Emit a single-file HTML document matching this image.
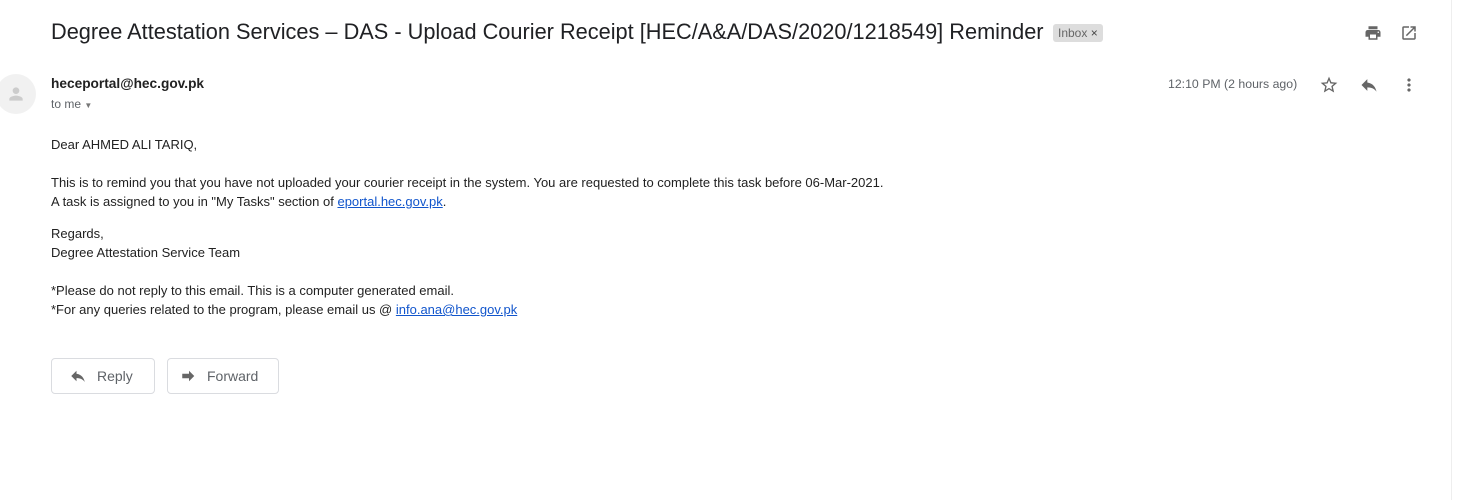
<!DOCTYPE html>
<html><head><meta charset="utf-8"><style>
*{margin:0;padding:0;box-sizing:border-box}
body{width:1464px;height:500px;background:#fff;font-family:"Liberation Sans",Arial,sans-serif;position:relative;overflow:hidden;color:#222}
.a{position:absolute;white-space:nowrap}
.vline{position:absolute;left:1451px;top:0;width:1px;height:500px;background:#eee}
.title{left:51px;top:19px;font-size:21.75px;color:#202124}
.chip{left:1053px;top:24px;height:18px;padding:0 5px;background:#ddd;border-radius:3px;font-size:12px;color:#666;line-height:18px}
.av{left:-4px;top:74px;width:40px;height:40px;border-radius:50%;background:#f1f1f1}
.body{left:51px;font-size:13px;color:#222}
a{color:#15c;text-decoration:underline}
.btn{position:absolute;top:358px;height:36px;border:1px solid #dadce0;border-radius:4px;font-size:14px;color:#5f6368;line-height:34px}
</style></head><body>
<div class="vline"></div>
<div class="a title">Degree Attestation Services – DAS - Upload Courier Receipt [HEC/A&amp;A/DAS/2020/1218549] Reminder</div>
<div class="a chip">Inbox <span style="color:#444">×</span></div>
<svg class="a" style="left:1364px;top:24px" width="18" height="18" viewBox="0 0 24 24"><path fill="#666" d="M19 8H5c-1.66 0-3 1.34-3 3v6h4v4h12v-4h4v-6c0-1.66-1.34-3-3-3zm-3 11H8v-5h8v5zm3-7c-.55 0-1-.45-1-1s.45-1 1-1 1 .45 1 1-.45 1-1 1zm-1-9H6v4h12V3z"/></svg>
<svg class="a" style="left:1400px;top:24px" width="18" height="18" viewBox="0 0 24 24"><path fill="#666" d="M19 19H5V5h7V3H5a2 2 0 00-2 2v14a2 2 0 002 2h14c1.1 0 2-.9 2-2v-7h-2v7zM14 3v2h3.59l-9.83 9.83 1.41 1.41L19 6.41V10h2V3h-7z"/></svg>
<div class="a av"><svg style="position:absolute;left:10px;top:10px" width="20" height="20" viewBox="0 0 24 24"><path fill="#ccc" d="M12 12c2.2 0 4-1.8 4-4s-1.8-4-4-4-4 1.8-4 4 1.8 4 4 4zm0 2c-2.7 0-8 1.3-8 4v2h16v-2c0-2.7-5.3-4-8-4z"/></svg></div>
<div class="a" style="left:51px;top:76px;font-size:13.7px;font-weight:bold;color:#222">heceportal@hec.gov.pk</div>
<div class="a" style="left:51px;top:97px;font-size:12px;color:#5f6368">to me <span style="font-size:8px;color:#777">▼</span></div>
<div class="a" style="left:1168px;top:77px;font-size:12.3px;color:#5f6368">12:10 PM (2 hours ago)</div>
<svg class="a" style="left:1319px;top:75px" width="20" height="20" viewBox="0 0 24 24"><path fill="#666" d="M22 9.24l-7.19-.62L12 2 9.19 8.63 2 9.24l5.46 4.73L5.82 21 12 17.27 18.18 21l-1.630-7.03L22 9.24zM12 15.4l-3.76 2.27 1-4.28-3.32-2.88 4.38-.38L12 6.1l1.71 4.04 4.38.38-3.32 2.88 1 4.28L12 15.4z"/></svg>
<svg class="a" style="left:1359px;top:75px" width="20" height="20" viewBox="0 0 24 24"><path fill="#666" d="M10 9V5l-7 7 7 7v-4.1c5 0 8.5 1.6 11 5.1-1-5-4-10-11-11z"/></svg>
<svg class="a" style="left:1399px;top:75px" width="20" height="20" viewBox="0 0 24 24"><path fill="#666" d="M12 8c1.1 0 2-.9 2-2s-.9-2-2-2-2 .9-2 2 .9 2 2 2zm0 2c-1.1 0-2 .9-2 2s.9 2 2 2 2-.9 2-2-.9-2-2-2zm0 6c-1.1 0-2 .9-2 2s.9 2 2 2 2-.9 2-2-.9-2-2-2z"/></svg>
<div class="a body" style="top:137px">Dear AHMED ALI TARIQ,</div>
<div class="a body" style="top:175px">This is to remind you that you have not uploaded your courier receipt in the system. You are requested to complete this task before 06-Mar-2021.</div>
<div class="a body" style="top:194px">A task is assigned to you in "My Tasks" section of <a>eportal.hec.gov.pk</a>.</div>
<div class="a body" style="top:226px">Regards,</div>
<div class="a body" style="top:245px">Degree Attestation Service Team</div>
<div class="a body" style="top:283px">*Please do not reply to this email. This is a computer generated email.</div>
<div class="a body" style="top:302px">*For any queries related to the program, please email us @ <a>info.ana@hec.gov.pk</a></div>
<div class="btn" style="left:51px;width:104px"><svg style="position:absolute;left:17px;top:8px" width="18" height="18" viewBox="0 0 24 24"><path fill="#666" d="M10 9V5l-7 7 7 7v-4.1c5 0 8.5 1.6 11 5.1-1-5-4-10-11-11z"/></svg><span style="position:absolute;left:45px">Reply</span></div>
<div class="btn" style="left:167px;width:112px"><svg style="position:absolute;left:12px;top:8px" width="18" height="18" viewBox="0 0 24 24"><path fill="#666" d="M3 9h9V5l7 7-7 7v-4H3z"/></svg><span style="position:absolute;left:39px">Forward</span></div>
</body></html>
